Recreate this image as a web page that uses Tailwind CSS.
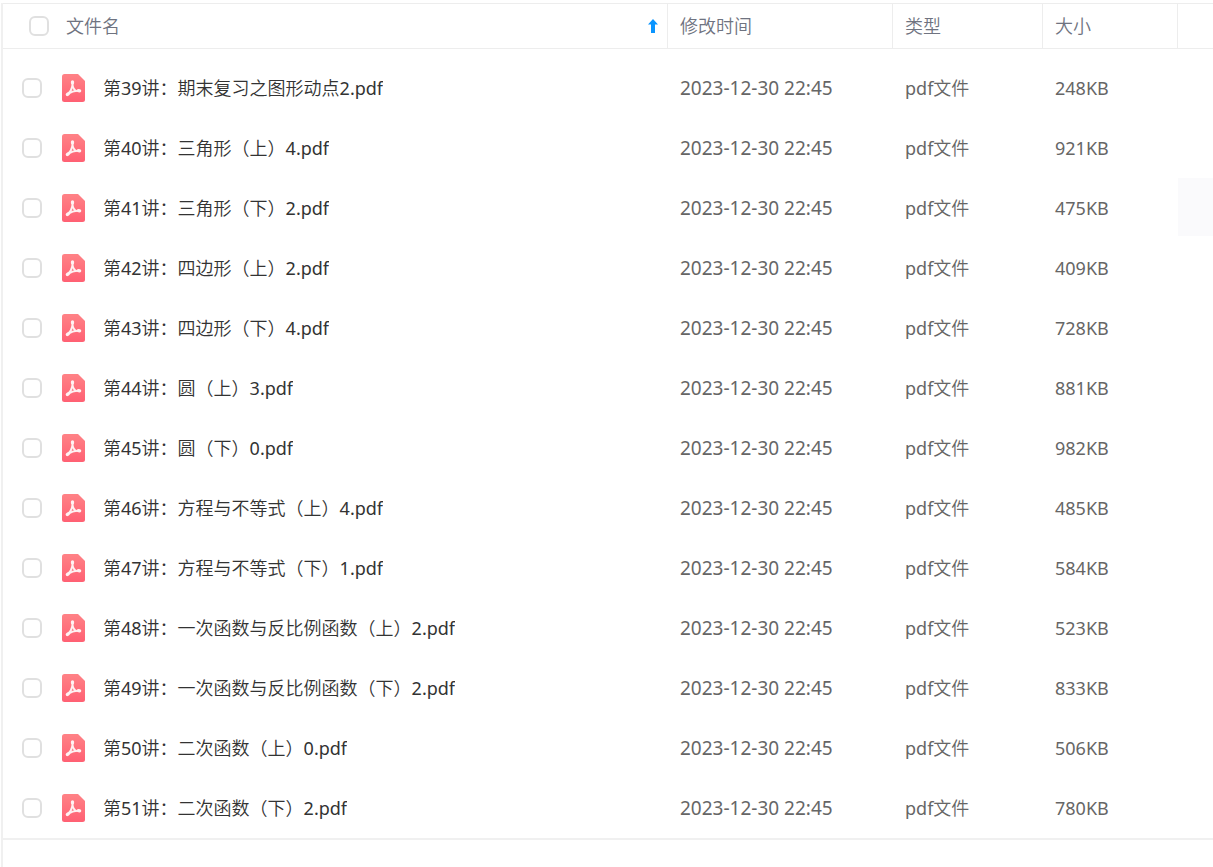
<!DOCTYPE html>
<html lang="zh-CN">
<head>
    <meta charset="UTF-8">
    <meta name="viewport" content="width=device-width, initial-scale=1.0">
    <title>文件列表</title>
    <!-- Tailwind CSS -->
    <script src="https://cdn.jsdelivr.net/npm/@tailwindcss/browser@4"></script>
</head>
<body class="bg-white pl-px pt-[3px] font-['Noto_Sans','Noto_Sans_CJK_SC_DemiLight','Noto_Sans_CJK_SC',sans-serif] text-lg leading-6">

<!-- Shared icon -->
<svg class="absolute size-0" aria-hidden="true">
    <defs>
        <linearGradient id="pdfFill" x1="0" y1="0" x2="0" y2="1">
            <stop offset="0" stop-color="#ff8286"/>
            <stop offset="1" stop-color="#ff6073"/>
        </linearGradient>
    </defs>
    <symbol id="pdfIcon" viewBox="0 0 24 29">
        <path d="M3.5 0H17l7 7V25.500q0 2.500-2.500 2.500H3.500Q1 28 1 25.500V2.500Q1 0 3.500 0z" fill="url(#pdfFill)"/>
        <g fill="none" stroke="#fff2f2" stroke-linecap="round" stroke-linejoin="round">
            <path d="M11.500 8v4c0.600 1.800 1.500 3.300 2.800 4.500" stroke-width="2"/>
            <path d="M11.500 12c-0.700 3.200-2.700 6.500-5 8.800" stroke-width="2"/>
            <path d="M6.500 20.300c3.500-2.500 7.500-3.700 12-3.500" stroke-width="1.900"/>
            <path d="M11.500 7.800v1.200M6.300 20.600l1-0.800M17.500 16.700l1.200 0.100" stroke-width="3.200"/>
        </g>
    </symbol>
</svg>

<!-- File list -->
<main class="min-h-[calc(100vh-3px)] border-l-2 border-[#f0f0f0]">
    <table class="w-full table-fixed border-separate border-spacing-0 border-b-2 border-[#f0f0f0] text-left">
        <colgroup>
            <col>
            <col class="w-[225px]">
            <col class="w-[150px]">
            <col class="w-[135px]">
            <col class="w-[35px]">
        </colgroup>
        <thead class="text-[#6f7380]">
            <tr class="h-[46px]">
                <th class="border-y border-r border-[#ededed] p-0 font-light">
                    <div class="flex items-center pl-[26px] pr-2">
                        <input type="checkbox" id="checkAll" aria-label="全选" class="size-5 appearance-none rounded-md border-2 border-[#e0e0e0] bg-white checked:bg-[#0a95ff]">
                        <label for="checkAll" class="ml-[17px] flex-1">文件名</label>
                        <button type="button" aria-label="排序" class="cursor-pointer">
                            <svg class="h-4 w-3" viewBox="0 0 12 16" fill="#0a95ff">
                                <path d="M6 1l5 5.500H8V15H4V6.500H1z"/>
                            </svg>
                        </button>
                    </div>
                </th>
                <th class="border-y border-r border-[#ededed] px-3 py-0 font-light">修改时间</th>
                <th class="border-y border-r border-[#ededed] px-3 py-0 font-light">类型</th>
                <th class="border-y border-r border-[#ededed] px-3 py-0 font-light">大小</th>
                <th class="border-y border-[#ededed] p-0"></th>
            </tr>
            <tr class="h-[9px]"><td colspan="5" class="p-0"></td></tr>
        </thead>
        <tbody id="fileList" class="text-[#666]"></tbody>
    </table>
</main>

<script>
    const files = [
        ['第39讲：期末复习之图形动点2.pdf', '248KB'],
        ['第40讲：三角形（上）4.pdf', '921KB'],
        ['第41讲：三角形（下）2.pdf', '475KB'],
        ['第42讲：四边形（上）2.pdf', '409KB'],
        ['第43讲：四边形（下）4.pdf', '728KB'],
        ['第44讲：圆（上）3.pdf', '881KB'],
        ['第45讲：圆（下）0.pdf', '982KB'],
        ['第46讲：方程与不等式（上）4.pdf', '485KB'],
        ['第47讲：方程与不等式（下）1.pdf', '584KB'],
        ['第48讲：一次函数与反比例函数（上）2.pdf', '523KB'],
        ['第49讲：一次函数与反比例函数（下）2.pdf', '833KB'],
        ['第50讲：二次函数（上）0.pdf', '506KB'],
        ['第51讲：二次函数（下）2.pdf', '780KB']
    ];
    const activeRow = 2;

    document.getElementById('fileList').innerHTML = files.map(([name, size], i) => `
        <tr class="h-[60px]">
            <td class="p-0">
                <div class="flex items-center pl-[19px]">
                    <input type="checkbox" id="file${i}" class="size-5 shrink-0 appearance-none rounded-md border-2 border-[#e0e0e0] bg-white checked:bg-[#0a95ff]">
                    <svg class="ml-[19px] h-[29px] w-6 shrink-0"><use href="#pdfIcon"/></svg>
                    <label for="file${i}" class="ml-[18px] truncate text-[#333]">${name}</label>
                </div>
            </td>
            <td class="px-3 py-0 text-[19px]">2023-12-30 22:45</td>
            <td class="px-3 py-0">pdf文件</td>
            <td class="px-3 py-0">${size}</td>
            <td class="p-0 align-top">${i === activeRow ? '<div class="h-[58px] bg-[#fafafc]"></div>' : ''}</td>
        </tr>`).join('');

    // Select all
    document.getElementById('checkAll').onchange = function (e) {
        document.querySelectorAll('#fileList input').forEach(box => box.checked = e.target.checked);
    };
</script>

</body>
</html>
